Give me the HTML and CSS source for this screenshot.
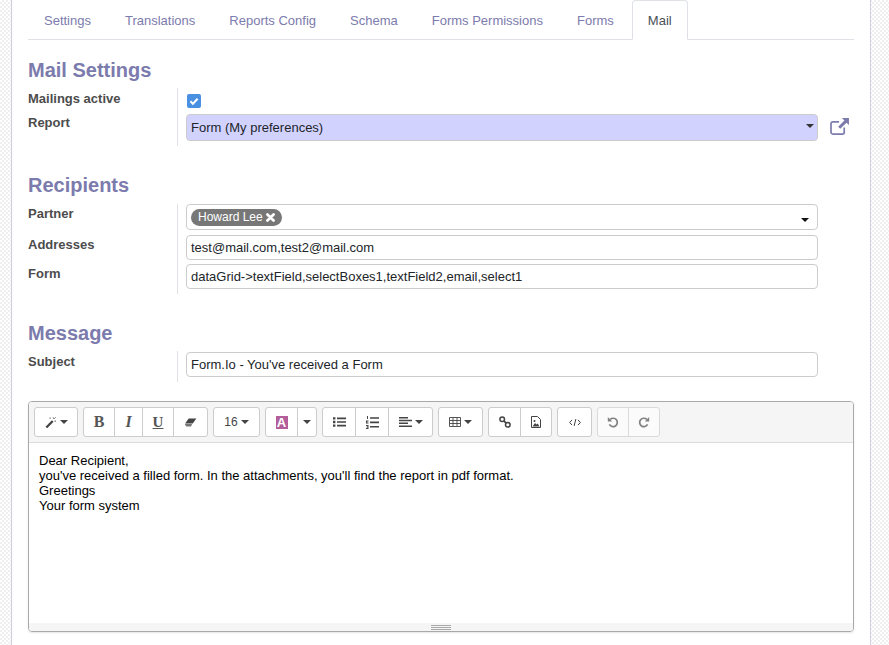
FILE: index.html
```html
<!DOCTYPE html>
<html lang="en">
<head>
<meta charset="utf-8">
<title>Mail</title>
<link rel="stylesheet" href="styles.css">
</head>
<body>
<main class="sheet">
  <ul class="tabs">
    <li class="tab">Settings</li>
    <li class="tab">Translations</li>
    <li class="tab">Reports Config</li>
    <li class="tab">Schema</li>
    <li class="tab">Forms Permissions</li>
    <li class="tab">Forms</li>
    <li class="tab active">Mail</li>
  </ul>

  <h2 class="title first">Mail Settings</h2>
  <div class="group g1">
    <div class="labels">
      <div class="label l-mail">Mailings active</div>
      <div class="label l-report">Report</div>
    </div>
    <div class="fields">
      <div class="check-row">
        <span class="check"><svg viewBox="0 0 14 14" width="14" height="14"><path d="M3.4 7.2l2.5 2.5 4.7-5" fill="none" stroke="#fff" stroke-width="2"/></svg></span>
      </div>
      <div class="select-row">
        <div class="input select">Form (My preferences)<span class="caret"></span></div>
        <svg class="ext" viewBox="0 0 20 18" width="19" height="17"><path d="M15 10v5a2 2 0 0 1-2 2H3a2 2 0 0 1-2-2V6a2 2 0 0 1 2-2h6.5" fill="none" stroke="#7c7bad" stroke-width="1.8"/><path d="M12.5 0H20v7.5l-2.6-2.6-6.6 6.6-2.2-2.2 6.6-6.6z" fill="#7c7bad"/></svg>
      </div>
    </div>
  </div>

  <h2 class="title">Recipients</h2>
  <div class="group g2">
    <div class="labels">
      <div class="label l-partner">Partner</div>
      <div class="label l-addr">Addresses</div>
      <div class="label l-form">Form</div>
    </div>
    <div class="fields">
      <div class="input partner"><span class="badge">Howard Lee <svg viewBox="0 0 10 10" width="9" height="9"><path d="M1.6 1.6l6.8 6.8M8.4 1.6L1.6 8.4" stroke="#fff" stroke-width="3" stroke-linecap="round"/></svg></span><span class="caret dark"></span></div>
      <div class="input addr">test@mail.com,test2@mail.com</div>
      <div class="input form">dataGrid-&gt;textField,selectBoxes1,textField2,email,select1</div>
    </div>
  </div>

  <h2 class="title third">Message</h2>
  <div class="group g3">
    <div class="labels">
      <div class="label l-subject">Subject</div>
    </div>
    <div class="fields">
      <div class="input subject">Form.Io - You've received a Form</div>
    </div>
  </div>

  <section class="editor">
    <div class="toolbar">
      <div class="btn-group">
        <span class="btn b42"><svg viewBox="0 0 13 12" width="12" height="11"><path d="M0.5 10.5L7.5 3.5l1.8 1.8-7 7z" fill="#444"/><path d="M9 .5l.8 1.6M12 4.5h-1.6M5.5.5v1.5M11.5.5l-1.2 1.2" stroke="#444"/></svg><span class="mini-caret"></span></span>
      </div>
      <div class="btn-group">
        <span class="btn b30 letter bold">B</span>
        <span class="btn b28 letter ital">I</span>
        <span class="btn b31 letter under">U</span>
        <span class="btn b34"><svg viewBox="0 0 14 10" width="13" height="9"><path d="M5 .5h8.5L9.5 6H1z" fill="#444"/><path d="M.6 6.8h8.2L7.6 9.5H2.2z" fill="#777"/></svg></span>
      </div>
      <div class="btn-group">
        <span class="btn b45 size">16<span class="mini-caret"></span></span>
      </div>
      <div class="btn-group">
        <span class="btn b31"><span class="color-a">A</span></span>
        <span class="btn b19"><span class="mini-caret"></span></span>
      </div>
      <div class="btn-group">
        <span class="btn b32"><svg viewBox="0 0 13 10" width="13" height="10"><path d="M0 .2h2.4v2.4H0zM0 3.8h2.4v2.4H0zM0 7.4h2.4v2.4H0z" fill="#444"/><path d="M4 .6h9v1.6H4zM4 4.2h9v1.6H4zM4 7.8h9v1.6H4z" fill="#444"/></svg></span>
        <span class="btn b33"><svg viewBox="0 0 13 13" width="13" height="13"><path d="M1 0h1v3H1zM0 4.5h2.5v1H1.2v1H2.5v1H0zM0 9h2.5v4H0v-1h1.5v-.5H.6v-1h.9V10H0z" fill="#444"/><path d="M4 1.2h9v1.6H4zM4 5.6h9v1.6H4zM4 10h9v1.6H4z" fill="#444"/></svg></span>
        <span class="btn b44"><svg viewBox="0 0 13 10" width="13" height="10"><path d="M0 0h9v1.5H0zM0 2.8h13v1.5H0zM0 5.6h9v1.5H0zM0 8.4h13v1.5H0z" fill="#444"/></svg><span class="mini-caret"></span></span>
      </div>
      <div class="btn-group">
        <span class="btn b43"><svg viewBox="0 0 12 10" width="12" height="10"><path d="M.5.5h11v9H.5zM.5 3.5h11M.5 6.5h11M4 .5v9M8 .5v9" fill="none" stroke="#444" stroke-width=".9"/></svg><span class="mini-caret"></span></span>
      </div>
      <div class="btn-group">
        <span class="btn b31"><svg viewBox="0 0 12 12" width="12" height="12"><circle cx="3.2" cy="3.2" r="2.3" fill="none" stroke="#444" stroke-width="1.5"/><circle cx="8.8" cy="8.8" r="2.3" fill="none" stroke="#444" stroke-width="1.5"/><path d="M4.8 4.8l2.4 2.4" stroke="#444" stroke-width="1.8"/></svg></span>
        <span class="btn b31"><svg viewBox="0 0 10 12" width="10" height="12"><path d="M.5.5h6l3 3v8h-9z" fill="none" stroke="#444"/><path d="M1.5 10.5l2.5-3.5 1.5 1.5 1.2-1 1.8 3z" fill="#444"/><circle cx="3.5" cy="5" r="1" fill="#444"/></svg></span>
      </div>
      <div class="btn-group">
        <span class="btn b33"><svg viewBox="0 0 14 10" width="12" height="9"><path d="M3.5 2L.8 5l2.7 3M10.5 2l2.7 3-2.7 3M8 1L6 9" fill="none" stroke="#333" stroke-width="1.1"/></svg></span>
      </div>
      <div class="btn-group faded">
        <span class="btn b30"><svg viewBox="0 0 12 12" width="12" height="12"><path d="M3.2 3.4A4.2 4.2 0 1 1 2.4 8.4" fill="none" stroke="#444" stroke-width="1.7"/><path d="M.8 1v4.4h4.4z" fill="#444"/></svg></span>
        <span class="btn b31"><svg viewBox="0 0 12 12" width="12" height="12"><path d="M8.8 3.4A4.2 4.2 0 1 0 9.6 8.4" fill="none" stroke="#444" stroke-width="1.7"/><path d="M11.2 1v4.4H6.8z" fill="#444"/></svg></span>
      </div>
    </div>
    <div class="content">
      <p>Dear Recipient,</p>
      <p>you've received a filled form. In the attachments, you'll find the report in pdf format.</p>
      <p>Greetings</p>
      <p>Your form system</p>
    </div>
    <div class="statusbar"><span class="grip"></span></div>
  </section>
</main>
</body>
</html>
```
FILE: styles.css
```css
* { box-sizing: border-box; }
html, body { margin: 0; height: 645px; overflow: hidden; }
body {
  background-color: #fff;
  background-image: conic-gradient(#efefef 25%, #fff 0 50%, #efefef 0 75%, #fff 0);
  background-size: 4px 4px;
  font-family: "Liberation Sans", Arial, sans-serif;
  font-size: 13px;
  color: #212529;
}
.sheet {
  width: 860px;
  height: 645px;
  margin-left: 11px;
  padding: 0 16px;
  background: #fff;
  border-left: 1px solid #cfcfdf;
  border-right: 1px solid #cfcfdf;
}
.tabs {
  display: flex;
  list-style: none;
  margin: 0;
  padding: 0;
  height: 40px;
  border-bottom: 1px solid #dee2e6;
}
.tab {
  height: 40px;
  padding: 13px 16px 0;
  margin-right: 2px;
  line-height: 15px;
  color: #7c7bad;
}
.tab.active {
  padding: 12px 15px 0;
  color: #495057;
  background: #fff;
  border: 1px solid #dee2e6;
  border-bottom-color: #fff;
  border-radius: 4px 4px 0 0;
}
.title {
  margin: 0;
  color: #7c7bad;
  font-size: 20px;
  line-height: 24px;
  font-weight: 700;
  height: 24px;
}
.title.first { margin-top: 18px; margin-bottom: 6px; }
.group + .title { margin-top: 27px; margin-bottom: 7px; }
.title.third { margin-top: 27px; margin-bottom: 6px; }
.group { display: grid; grid-template-columns: 149px 1fr; }
.labels { color: #4c4c4c; font-weight: 700; line-height: 15px; }
.fields { border-left: 1px solid #dee2e6; padding-left: 8px; }
.label { height: 15px; }
.l-mail { margin-top: 3px; }
.l-report { margin-top: 9px; }
.l-partner { margin-top: 2px; }
.l-addr { margin-top: 16px; }
.l-form { margin-top: 14px; }
.l-subject { margin-top: 3px; }
.g1 .fields { height: 58px; }
.g2 .fields { height: 90px; }
.g3 .fields { height: 31px; }
.check-row { height: 26px; padding: 6px 0 0 1px; }
.check {
  display: block;
  width: 14px;
  height: 14px;
  background: #4a90e2;
  border-radius: 2px;
}
.check svg { display: block; }
.select-row { display: flex; align-items: center; }
.input {
  position: relative;
  width: 632px;
  height: 25px;
  padding: 0 4px;
  line-height: 24px;
  font-size: 13px;
  color: #212529;
  background: #fff;
  border: 1px solid #ccc;
  border-radius: 4px;
}
.select { height: 27px; line-height: 25px; background: #d2d2ff; }
.ext { margin: 0 0 2px 12px; }
.caret {
  position: absolute;
  right: 3px;
  top: 9px;
  border-top: 4px solid #333;
  border-left: 4px solid transparent;
  border-right: 4px solid transparent;
}
.caret.dark { top: 13px; right: 8px; border-top-color: #111; }
.partner { height: 26px; padding: 4px; margin-bottom: 5px; }
.addr { margin-bottom: 4px; }
.badge {
  display: inline-flex;
  align-items: center;
  gap: 3px;
  height: 17px;
  padding: 0 7px;
  border-radius: 9px;
  background: #777;
  color: #fff;
  font-size: 12px;
  line-height: 17px;
  vertical-align: top;
}
.subject { margin-top: 1px; }
.editor {
  width: 826px;
  height: 231px;
  margin-top: 19px;
  display: flex;
  flex-direction: column;
  border: 1px solid #a9a9a9;
  border-radius: 4px;
  box-shadow: 0 1px 2px rgba(0, 0, 0, .1);
}
.toolbar {
  display: flex;
  gap: 5px;
  height: 41px;
  padding: 5px;
  background: #f5f5f5;
  border-bottom: 1px solid #ddd;
  border-radius: 3px 3px 0 0;
}
.btn-group {
  display: flex;
  height: 30px;
  background: #fff;
  border: 1px solid #ccc;
  border-radius: 3px;
}
.btn {
  display: flex;
  align-items: center;
  justify-content: center;
  gap: 3px;
  height: 28px;
  color: #444;
  border-left: 1px solid #ccc;
}
.btn:first-child { border-left: 0; }
.b19 { width: 19px; }
.b28 { width: 28px; }
.b30 { width: 30px; }
.b31 { width: 31px; }
.b32 { width: 32px; }
.b33 { width: 33px; }
.b34 { width: 34px; }
.b42 { width: 42px; }
.b43 { width: 43px; }
.b44 { width: 44px; }
.b45 { width: 45px; }
.letter { font-family: "Liberation Serif", serif; font-size: 16px; color: #555; }
.bold { font-weight: 700; }
.ital { font-style: italic; font-weight: 700; }
.under { text-decoration: underline; font-size: 15px; font-weight: 700; }
.size { font-size: 12px; }
.mini-caret {
  display: block;
  border-top: 4px solid #444;
  border-left: 4px solid transparent;
  border-right: 4px solid transparent;
}
.faded { opacity: .65; }
.color-a {
  display: block;
  width: 12px;
  height: 13px;
  background: #b35e9b;
  color: #fff;
  font-size: 13px;
  font-weight: 700;
  line-height: 13px;
  text-align: center;
}
.content {
  flex: 1;
  padding: 10px;
  color: #000;
  line-height: 15px;
  background: #fff;
}
.content p { margin: 0; }
.statusbar {
  display: flex;
  justify-content: center;
  height: 8px;
  padding-top: 2px;
  background: #f5f5f5;
  border-radius: 0 0 3px 3px;
}
.grip {
  display: block;
  width: 20px;
  height: 5px;
  border-top: 1px solid #a9a9a9;
  border-bottom: 1px solid #a9a9a9;
  background: linear-gradient(#f5f5f5 1px, #a9a9a9 1px, #a9a9a9 2px, #f5f5f5 2px);
}
```
